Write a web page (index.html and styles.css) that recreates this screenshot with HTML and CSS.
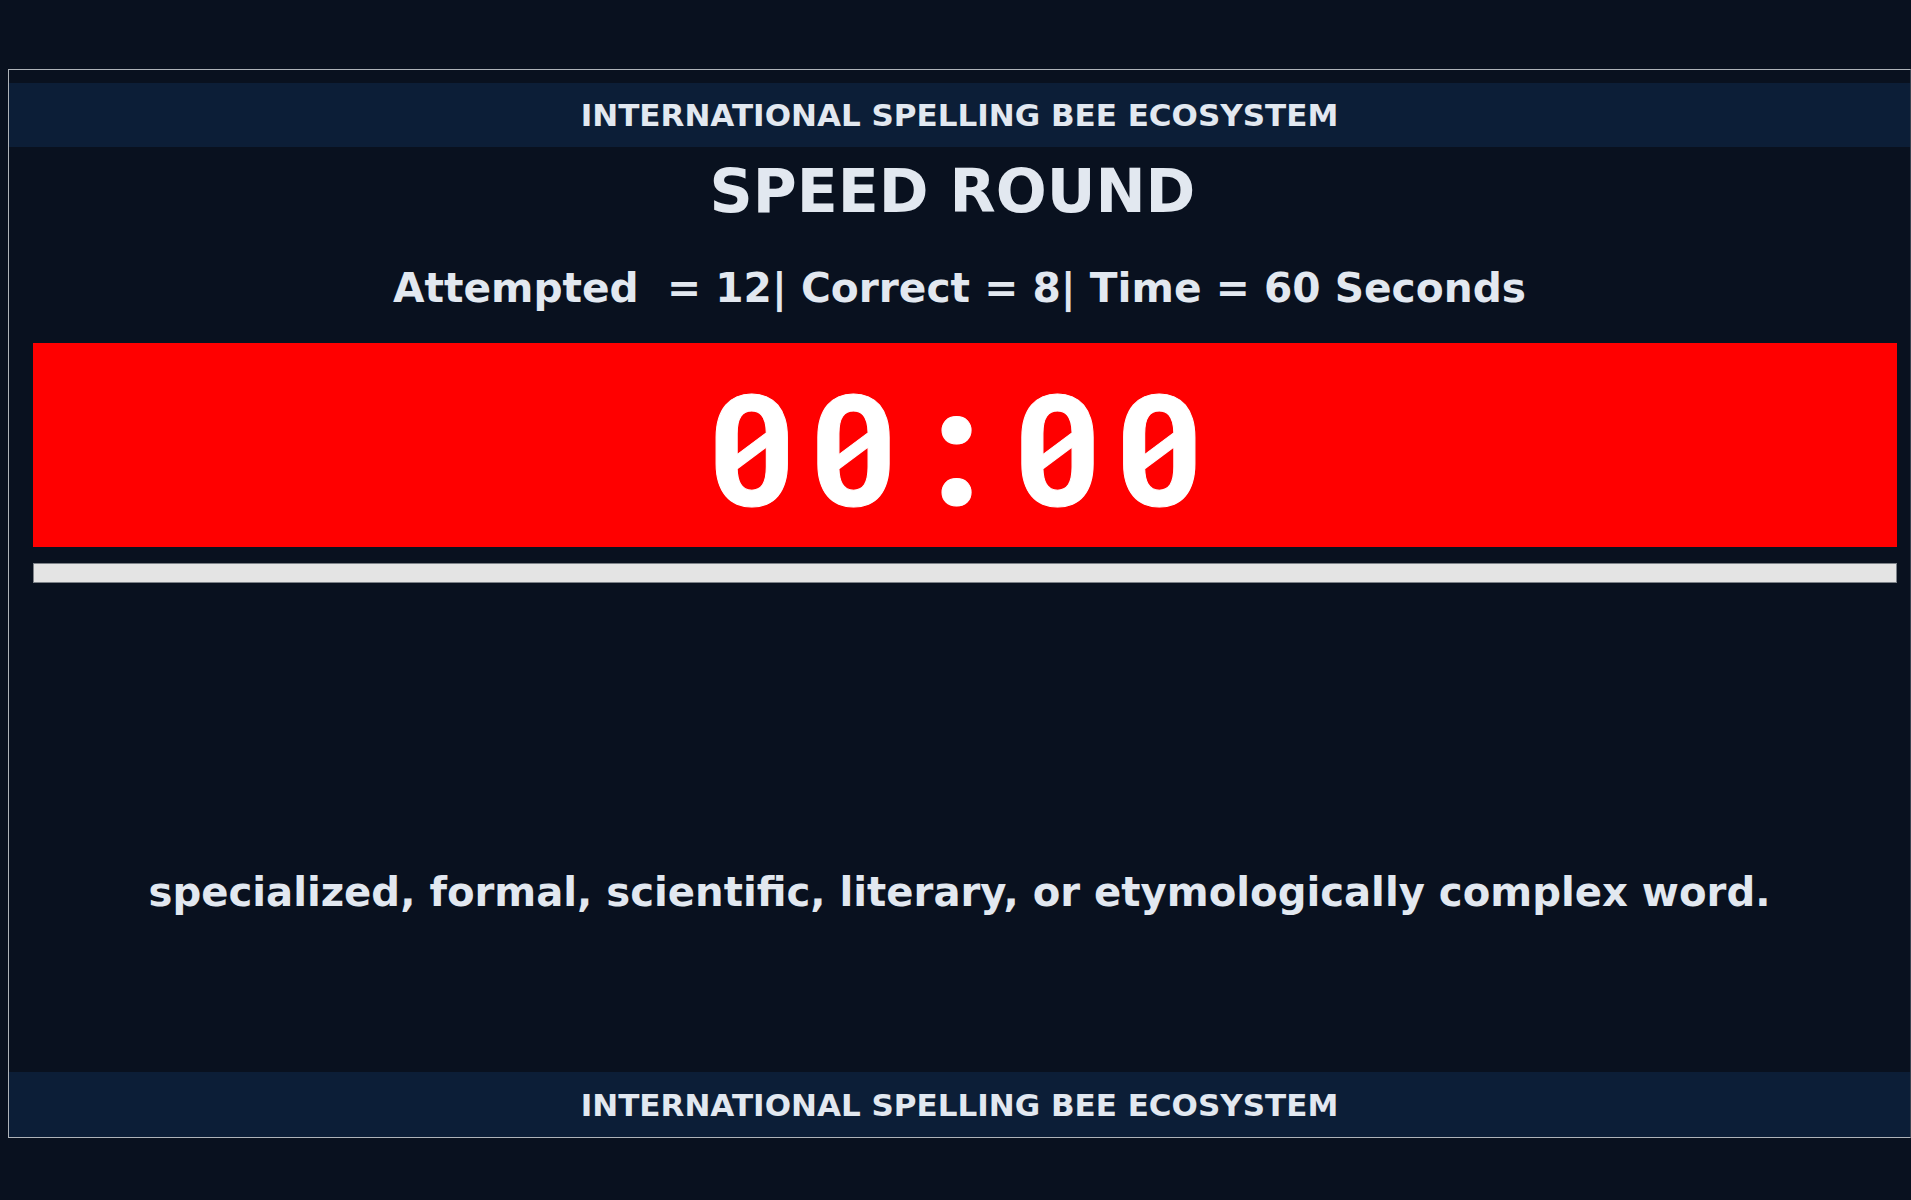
FILE: index.html
```html
<!DOCTYPE html>
<html lang="en">
<head>
<meta charset="utf-8">
<title>Speed Round</title>
<link rel="stylesheet" href="styles.css">
</head>
<body>
<div class="frame">
  <div class="band band-top">INTERNATIONAL SPELLING BEE ECOSYSTEM</div>
  <h1 class="title">SPEED ROUND</h1>
  <div class="stats">Attempted&nbsp; = 12| Correct = 8| Time = 60 Seconds</div>
  <div class="timer"><span class="timer-text">00:00</span></div>
  <div class="progress"></div>
  <div class="definition">specialized, formal, scientific, literary, or etymologically complex word.</div>
  <div class="band band-bottom">INTERNATIONAL SPELLING BEE ECOSYSTEM</div>
</div>
</body>
</html>
```
FILE: styles.css
```css
html, body {
  margin: 0;
  padding: 0;
  background: #09111f;
  overflow: hidden;
}
body {
  width: 1911px;
  height: 1200px;
  font-family: "DejaVu Sans", Verdana, sans-serif;
  color: #e2e8f0;
}
.frame {
  margin: 69px 0 0 8px;
  width: 1901px;
  height: 1054px;
  border: 1px solid #aeb3b9;
  border-right-color: #3a4350;
  padding-top: 13px;
  box-sizing: content-box;
  display: flex;
  flex-direction: column;
}
.frame > * { flex: none; }
.band {
  height: 64px;
  background: #0c1e37;
  display: flex;
  align-items: center;
  justify-content: center;
  font-weight: bold;
  font-size: 31px;
  color: #e2e8f0;
}
.band-bottom { margin-top: auto; height: 65px; }
.title {
  margin: 8px 0 0 0;
  padding-right: 14px;
  font-size: 60px;
  line-height: 72px;
  font-weight: bold;
  text-align: center;
}
.stats {
  margin-top: 37px;
  font-size: 40.7px;
  line-height: 48px;
  font-weight: bold;
  text-align: center;
}
.timer {
  margin: 31px 13px 0 24px;
  height: 204px;
  background: #ff0000;
  display: flex;
  align-items: center;
  justify-content: center;
}
.timer-text {
  font-family: "Roboto Mono", monospace;
  font-weight: bold;
  font-size: 154px;
  letter-spacing: 9.5px;
  line-height: 1;
  color: #ffffff;
  padding-top: 2px;
  padding-right: 9.5px;
  -webkit-text-stroke: 1px #ffffff;
}
.progress {
  margin: 16px 13px 0 24px;
  height: 18px;
  background: #e4e4e4;
  border: 1px solid #7d8288;
}
.definition {
  margin-top: 285px;
  font-size: 40.2px;
  line-height: 48px;
  font-weight: bold;
  text-align: center;
}
```
